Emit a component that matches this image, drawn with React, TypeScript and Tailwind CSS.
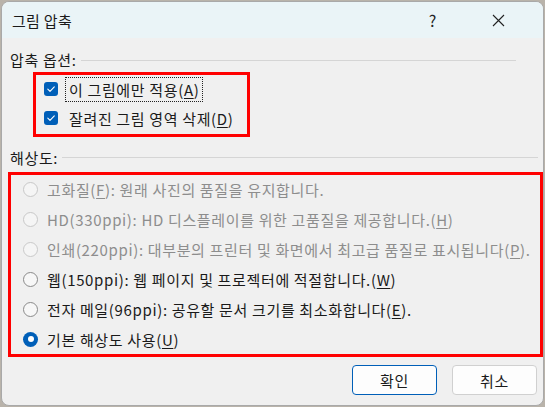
import React from "react";

const font = { fontFamily: '"Noto Sans CJK KR", "Noto Sans", sans-serif' };

function U({ c }: { c: string }) {
  return <span className="underline underline-offset-2">{c}</span>;
}

function Check() {
  return (
    <span className="w-[14px] h-[14px] rounded-[3px] bg-[#005FB8] flex items-center justify-center shrink-0">
      <svg width="10" height="10" viewBox="0 0 10 10">
        <path d="M1.8 5.2 L4 7.3 L8.3 2.8" fill="none" stroke="white" strokeWidth="1.1" strokeLinecap="round" strokeLinejoin="round" />
      </svg>
    </span>
  );
}

function Radio({ state }: { state: "disabled" | "off" | "on" }) {
  if (state === "on") {
    return (
      <span className="w-[15px] h-[15px] rounded-full bg-[#005FB8] flex items-center justify-center shrink-0">
        <span className="w-[6px] h-[6px] rounded-full bg-white" />
      </span>
    );
  }
  return (
    <span
      className={
        state === "disabled"
          ? "w-[15px] h-[15px] rounded-full border border-[#c8c8c8] bg-[#f5f5f5] shrink-0"
          : "w-[15px] h-[15px] rounded-full border border-[#8a8a8a] bg-[#f7f7f7] shrink-0"
      }
    />
  );
}

function RadioRow({ state, children }: { state: "disabled" | "off" | "on"; children: React.ReactNode }) {
  return (
    <div className="h-[30.5px] flex items-center pl-[12px]">
      <Radio state={state} />
      <span className={"ml-[9px] whitespace-nowrap " + (state === "disabled" ? "text-[#8d8d8d]" : "text-[#1a1a1a]")}>
        {children}
      </span>
    </div>
  );
}

export default function App() {
  return (
    <div className="w-[545px] h-[407px] bg-[#b9b3aa] p-[1px] overflow-hidden" style={font}>
      <div className="w-[543px] h-[405px] rounded-[8px] border border-[#a9a9a9] bg-[#f0f0f0] overflow-hidden flex flex-col text-[15px] tracking-[0.65px] leading-none text-[#1a1a1a]">
        {/* Title bar */}
        <div className="h-[36px] bg-[#eaf4f7] flex items-center shrink-0">
          <span className="ml-[10px] mt-[1px] text-[15px] tracking-[0.3px]">그림 압축</span>
          <span className="ml-auto mr-[55px] text-[16px] text-[#222]">?</span>
          <svg className="mr-[38px]" width="13" height="13" viewBox="0 0 13 13">
            <path d="M1 1 L12 12 M12 1 L1 12" stroke="#222" strokeWidth="1.1" />
          </svg>
        </div>

        {/* Section 1 */}
        <div className="h-[34px] flex items-center pl-[8px] pr-[27px] pt-[9px]">
          <span className="whitespace-nowrap">압축 옵션:</span>
          <div className="flex-1 h-px bg-[#d5d5d5] ml-[4px] mt-[1px]" />
        </div>
        <div className="ml-[31px] w-[217px] h-[65px] border-[3px] border-[#ff0000] flex flex-col">
          <div className="h-[28px] flex items-center pl-[8px]">
            <Check />
            <span className="ml-[7px] px-[3px] py-[4px] border border-dotted border-[#222] whitespace-nowrap">
              이 그림에만 적용(<U c="A" />)
            </span>
          </div>
          <div className="h-[30px] flex items-center pl-[8px]">
            <Check />
            <span className="ml-[11px] whitespace-nowrap">
              잘려진 그림 영역 삭제(<U c="D" />)
            </span>
          </div>
        </div>

        {/* Section 2 */}
        <div className="h-[35px] flex items-center pl-[8px] pt-[5px]">
          <span className="whitespace-nowrap">해상도:</span>
          <div className="flex-1 h-px bg-[#d5d5d5] ml-[4px] mr-[5px] mt-[1px]" />
        </div>
        <div className="ml-[6px] w-[535px] h-[185px] border-[3px] border-[#ff0000] flex flex-col">
          <RadioRow state="disabled">
            고화질(<U c="F" />): 원래 사진의 품질을 유지합니다.
          </RadioRow>
          <RadioRow state="disabled">
            HD(330ppi): HD 디스플레이를 위한 고품질을 제공합니다.(<U c="H" />)
          </RadioRow>
          <RadioRow state="disabled">
            인쇄(220ppi): 대부분의 프린터 및 화면에서 최고급 품질로 표시됩니다(<U c="P" />).
          </RadioRow>
          <RadioRow state="off">
            웹(150ppi): 웹 페이지 및 프로젝터에 적절합니다.(<U c="W" />)
          </RadioRow>
          <RadioRow state="off">
            전자 메일(96ppi): 공유할 문서 크기를 최소화합니다(<U c="E" />).
          </RadioRow>
          <RadioRow state="on">
            기본 해상도 사용(<U c="U" />)
          </RadioRow>
        </div>

        {/* Buttons */}
        <div className="flex justify-end gap-[15px] pr-[6px] mt-[8px]">
          <button className="w-[85px] h-[30px] rounded-[4px] border border-[#005FB8] bg-[#fdfdfd] text-[15px] tracking-[0.65px]">확인</button>
          <button className="w-[85px] h-[30px] rounded-[4px] border border-[#d0d0d0] bg-[#fdfdfd] text-[15px] tracking-[0.65px]">취소</button>
        </div>
      </div>
    </div>
  );
}
